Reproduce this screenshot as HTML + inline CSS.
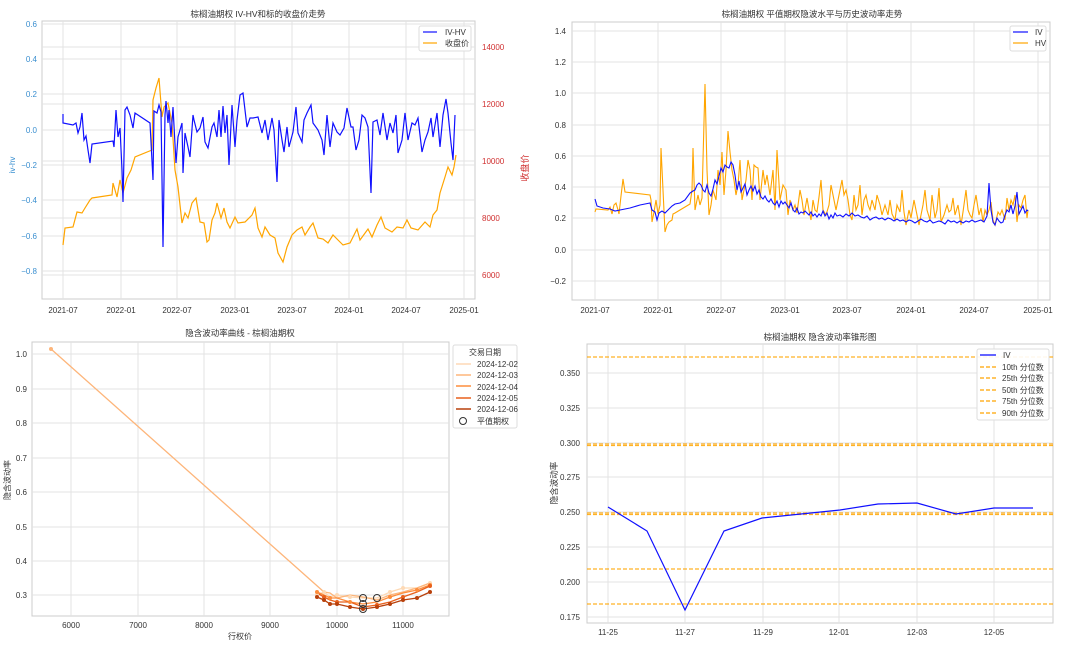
<!DOCTYPE html><html><head><meta charset="utf-8"><style>
html,body{margin:0;padding:0;background:#fff;}
svg{display:block;font-family:"Liberation Sans","Noto Sans CJK SC",sans-serif;}
.g line{stroke:#e3e3e3;stroke-width:1}
.t{font-size:8px;fill:#333}
.ti{font-size:8.5px;fill:#333}
</style></head><body>
<svg width="1080" height="646" viewBox="0 0 1080 646" xmlns="http://www.w3.org/2000/svg">
<!-- ===== Panel 1 ===== -->
<rect x="42" y="21" width="433" height="278" fill="#fff" stroke="#ccc"/>
<g class="g">
<line x1="63" y1="21" x2="63" y2="299"/><line x1="121" y1="21" x2="121" y2="299"/><line x1="177" y1="21" x2="177" y2="299"/><line x1="235" y1="21" x2="235" y2="299"/><line x1="292" y1="21" x2="292" y2="299"/><line x1="349" y1="21" x2="349" y2="299"/><line x1="406" y1="21" x2="406" y2="299"/><line x1="464" y1="21" x2="464" y2="299"/>
<line x1="42" y1="24" x2="475" y2="24"/><line x1="42" y1="59" x2="475" y2="59"/><line x1="42" y1="94" x2="475" y2="94"/><line x1="42" y1="130" x2="475" y2="130"/><line x1="42" y1="165" x2="475" y2="165"/><line x1="42" y1="200" x2="475" y2="200"/><line x1="42" y1="236" x2="475" y2="236"/><line x1="42" y1="271" x2="475" y2="271"/>
<line x1="42" y1="47" x2="475" y2="47"/><line x1="42" y1="104" x2="475" y2="104"/><line x1="42" y1="161" x2="475" y2="161"/><line x1="42" y1="218" x2="475" y2="218"/><line x1="42" y1="275" x2="475" y2="275"/>
</g>
<text class="ti" x="258" y="17" text-anchor="middle">棕榈油期权 IV-HV和标的收盘价走势</text>
<g font-size="8" fill="#3a8fd0" text-anchor="end">
<text x="37" y="27">0.6</text><text x="37" y="62">0.4</text><text x="37" y="97">0.2</text><text x="37" y="133">0.0</text><text x="37" y="168">−0.2</text><text x="37" y="203">−0.4</text><text x="37" y="239">−0.6</text><text x="37" y="274">−0.8</text>
</g>
<g font-size="8" fill="#d03030">
<text x="482" y="50">14000</text><text x="482" y="107">12000</text><text x="482" y="164">10000</text><text x="482" y="221">8000</text><text x="482" y="278">6000</text>
</g>
<text x="15" y="165" font-size="8" fill="#3a8fd0" transform="rotate(-90 15 165)" text-anchor="middle">iv-hv</text>
<text x="528" y="168" font-size="9" fill="#d03030" transform="rotate(-90 528 168)" text-anchor="middle">收盘价</text>
<g class="t" text-anchor="middle">
<text x="63" y="313">2021-07</text><text x="121" y="313">2022-01</text><text x="177" y="313">2022-07</text><text x="235" y="313">2023-01</text><text x="292" y="313">2023-07</text><text x="349" y="313">2024-01</text><text x="406" y="313">2024-07</text><text x="464" y="313">2025-01</text>
</g>
<polyline fill="none" stroke="#ffa500" stroke-width="1.2" points="63,245 65,228 73,227 77,212 82,213 85,208 90,200 92,198 112,195 113,183 117,197 120,180 123,193 127,178 131,170 135,157 152,150 153,100 156,88 159,78 162,117 164,107 168,103 172,123 175,170 178,187 182,223 185,213 188,218 192,203 196,198 200,222 204,223 207,242 209,240 212,220 215,213 217,203 221,218 224,208 227,222 230,228 235,217 238,223 245,222 252,215 255,208 258,228 262,237 265,227 270,235 275,238 278,253 283,262 287,247 292,235 297,230 302,227 305,235 310,227 313,223 318,238 323,239 328,243 333,235 338,240 343,245 350,243 357,229 360,240 368,229 372,237 377,225 381,217 385,228 392,232 397,227 403,228 407,220 411,228 418,230 425,222 430,227 433,215 437,210 440,193 445,177 448,167 452,175 454,167 456,155"/>
<polyline fill="none" stroke="#1010ff" stroke-width="1.2" points="63,114 63,123 73,125 76,123 78,133 80,127 82,113 84,140 86,136 88,150 90,163 92,144 113,141 114,147 116,110 118,137 120,128 122,170 123,202 125,110 127,107 130,115 133,128 135,113 150,123 153,180 154,111 157,113 159,105 161,112 163,247 165,115 166,101 168,123 169,110 171,137 173,107 176,163 178,137 182,123 183,173 185,133 188,147 190,157 193,115 194,120 197,132 200,128 203,117 205,142 208,148 212,127 214,123 217,137 219,110 221,137 223,106 225,133 227,115 229,165 232,105 235,147 237,120 240,95 243,93 247,127 250,118 253,118 258,117 262,133 265,120 268,140 272,118 274,130 277,182 279,120 282,140 284,152 287,127 289,147 293,132 296,107 298,133 302,142 304,120 307,113 311,105 313,123 318,130 322,140 324,155 327,115 330,147 333,123 337,132 340,135 344,128 347,108 351,127 353,127 356,150 359,140 362,115 365,118 368,127 371,193 373,122 377,120 380,135 383,113 387,140 390,123 393,133 396,115 398,153 402,140 405,113 408,140 412,123 415,125 418,118 422,152 425,140 428,132 431,118 433,137 437,113 440,147 443,115 446,99 448,113 451,143 453,160 455,115"/>
<rect x="419" y="26" width="52" height="25" fill="#fff" fill-opacity="0.9" stroke="#ddd" rx="2"/>
<line x1="423" y1="32" x2="437" y2="32" stroke="#1010ff" stroke-width="1.2"/><text class="t" x="445" y="35">IV-HV</text>
<line x1="423" y1="43" x2="437" y2="43" stroke="#ffa500" stroke-width="1.2"/><text class="t" x="445" y="46">收盘价</text>

<!-- ===== Panel 2 ===== -->
<rect x="572" y="22" width="478" height="278" fill="#fff" stroke="#ccc"/>
<g class="g">
<line x1="595" y1="22" x2="595" y2="300"/><line x1="658" y1="22" x2="658" y2="300"/><line x1="721" y1="22" x2="721" y2="300"/><line x1="785" y1="22" x2="785" y2="300"/><line x1="847" y1="22" x2="847" y2="300"/><line x1="911" y1="22" x2="911" y2="300"/><line x1="974" y1="22" x2="974" y2="300"/><line x1="1038" y1="22" x2="1038" y2="300"/>
<line x1="572" y1="31" x2="1050" y2="31"/><line x1="572" y1="62" x2="1050" y2="62"/><line x1="572" y1="93" x2="1050" y2="93"/><line x1="572" y1="125" x2="1050" y2="125"/><line x1="572" y1="156" x2="1050" y2="156"/><line x1="572" y1="187" x2="1050" y2="187"/><line x1="572" y1="218" x2="1050" y2="218"/><line x1="572" y1="250" x2="1050" y2="250"/><line x1="572" y1="281" x2="1050" y2="281"/>
</g>
<text class="ti" x="812" y="17" text-anchor="middle">棕榈油期权 平值期权隐波水平与历史波动率走势</text>
<g class="t" text-anchor="end">
<text x="566" y="34">1.4</text><text x="566" y="65">1.2</text><text x="566" y="96">1.0</text><text x="566" y="128">0.8</text><text x="566" y="159">0.6</text><text x="566" y="190">0.4</text><text x="566" y="221">0.2</text><text x="566" y="253">0.0</text><text x="566" y="284">−0.2</text>
</g>
<g class="t" text-anchor="middle">
<text x="595" y="313">2021-07</text><text x="658" y="313">2022-01</text><text x="721" y="313">2022-07</text><text x="785" y="313">2023-01</text><text x="847" y="313">2023-07</text><text x="911" y="313">2024-01</text><text x="974" y="313">2024-07</text><text x="1038" y="313">2025-01</text>
</g>
<polyline fill="none" stroke="#ffa500" stroke-width="1.1" points="595,212 596,209 608,210 610,207 612,214 614,205 616,203 618,210 619,214 621,196 623,179 625,192 650,195 651,200 652,222 654,212 656,200 658,214 660,205 661,148 663,190 665,232 667,225 669,222 672,220 673,214 675,213 690,204 692,190 693,148 695,210 698,195 700,205 702,198 705,84 707,170 709,215 711,205 713,190 716,200 718,170 720,185 722,152 724,195 726,170 728,131 730,152 732,170 734,180 736,195 738,185 740,160 742,200 744,190 746,180 748,160 750,170 752,200 754,165 756,167 758,168 760,200 763,170 765,185 767,175 770,195 773,170 775,210 777,150 780,200 783,185 786,190 788,215 790,200 793,210 795,205 797,213 800,190 802,200 804,215 807,198 809,210 811,220 813,200 815,210 817,212 819,197 821,180 823,210 826,215 829,205 831,185 833,195 836,210 838,200 840,190 842,180 844,195 846,190 848,200 850,215 852,220 854,195 856,210 858,205 860,185 862,215 864,200 866,195 868,205 870,210 872,200 875,210 877,195 880,205 882,215 885,205 888,215 890,200 892,214 895,220 897,205 900,212 902,190 904,212 906,225 909,210 911,218 914,200 916,210 919,225 921,215 923,205 925,190 927,210 930,220 932,195 935,218 937,210 939,188 941,222 944,215 947,205 949,212 951,210 953,198 955,215 958,205 961,225 963,212 966,190 968,210 970,215 972,218 974,205 976,195 979,215 981,208 983,222 985,210 987,215 989,210 991,202 993,220 995,225 998,212 1000,215 1002,210 1005,220 1007,198 1009,210 1011,200 1013,205 1015,195 1017,222 1019,205 1021,208 1023,200 1025,195 1027,218 1028,210"/>
<polyline fill="none" stroke="#1010ff" stroke-width="1.1" points="595,199 597,206 603,208 610,209 615,211 620,210 625,209 630,208 640,205 650,203 652,210 655,212 657,220 659,213 662,211 665,213 668,210 672,206 675,204 680,203 685,200 690,193 693,191 695,190 697,185 699,183 701,185 703,190 705,192 707,185 709,193 711,196 713,189 715,180 717,184 719,176 721,168 723,172 725,165 727,167 729,168 731,162 733,165 735,175 737,190 739,181 741,192 743,188 745,184 747,195 749,190 751,186 753,191 755,186 757,194 759,190 761,197 763,199 765,196 767,200 769,202 771,199 773,203 775,205 777,201 779,207 781,201 783,204 785,202 787,205 789,208 791,203 793,210 795,212 797,208 799,214 801,212 803,213 805,211 807,213 809,215 811,212 813,216 815,214 817,217 819,214 821,216 823,211 825,216 827,213 829,219 831,215 833,218 835,213 837,216 840,215 843,217 846,214 849,216 852,213 855,216 858,215 861,217 864,218 867,216 870,220 873,218 876,217 879,219 882,218 885,220 888,218 891,219 894,221 897,219 900,221 903,220 906,222 909,220 912,221 915,223 918,221 921,219 924,221 927,222 930,220 933,223 936,222 939,221 942,222 945,224 948,220 951,222 954,221 957,223 960,221 963,223 966,221 969,222 972,220 975,222 978,221 981,220 984,222 987,216 989,183 991,210 993,222 995,225 997,218 999,221 1001,223 1003,222 1005,215 1007,210 1009,212 1011,205 1013,214 1015,206 1017,192 1019,214 1021,210 1023,206 1025,213 1027,210 1028,211"/>
<rect x="1010" y="26" width="36" height="25" fill="#fff" fill-opacity="0.9" stroke="#ddd" rx="2"/>
<line x1="1013" y1="32" x2="1028" y2="32" stroke="#1010ff" stroke-width="1.2"/><text class="t" x="1035" y="35">IV</text>
<line x1="1013" y1="43" x2="1028" y2="43" stroke="#ffa500" stroke-width="1.2"/><text class="t" x="1035" y="46">HV</text>

<!-- ===== Panel 3 ===== -->
<rect x="32" y="342" width="417" height="274" fill="#fff" stroke="#ccc"/>
<g class="g">
<line x1="71" y1="342" x2="71" y2="616"/><line x1="138" y1="342" x2="138" y2="616"/><line x1="204" y1="342" x2="204" y2="616"/><line x1="270" y1="342" x2="270" y2="616"/><line x1="337" y1="342" x2="337" y2="616"/><line x1="403" y1="342" x2="403" y2="616"/>
<line x1="32" y1="354" x2="449" y2="354"/><line x1="32" y1="389" x2="449" y2="389"/><line x1="32" y1="423" x2="449" y2="423"/><line x1="32" y1="458" x2="449" y2="458"/><line x1="32" y1="492" x2="449" y2="492"/><line x1="32" y1="527" x2="449" y2="527"/><line x1="32" y1="561" x2="449" y2="561"/><line x1="32" y1="595" x2="449" y2="595"/>
</g>
<text class="ti" x="240" y="336" text-anchor="middle">隐含波动率曲线 - 棕榈油期权</text>
<g class="t" text-anchor="end">
<text x="27" y="357">1.0</text><text x="27" y="392">0.9</text><text x="27" y="426">0.8</text><text x="27" y="461">0.7</text><text x="27" y="495">0.6</text><text x="27" y="530">0.5</text><text x="27" y="564">0.4</text><text x="27" y="598">0.3</text>
</g>
<g class="t" text-anchor="middle">
<text x="71" y="628">6000</text><text x="138" y="628">7000</text><text x="204" y="628">8000</text><text x="270" y="628">9000</text><text x="337" y="628">10000</text><text x="403" y="628">11000</text>
<text x="240" y="639">行权价</text>
</g>
<text class="t" x="10" y="480" transform="rotate(-90 10 480)" text-anchor="middle">隐含波动率</text>
<g fill="none" stroke-width="1.3">
<polyline stroke="#fdd9b5" points="317,595 324,592 330,597 337,595 350,597 363,598 377,598 390,592 403,588 417,588 430,583"/>
<polyline stroke="#fdb57a" points="51,349 324,592 330,593 337,598 350,595 363,597 377,600 390,595 403,592 417,588 430,583"/>
<polyline stroke="#fd8d3c" points="317,592 324,595 330,598 337,598 350,602 363,604 377,602 390,597 403,593 417,590 430,585"/>
<polyline stroke="#e8601c" points="317,593 324,597 330,600 337,602 350,602 363,607 377,605 390,602 403,597 417,592 430,586"/>
<polyline stroke="#b8400b" points="317,597 324,600 330,604 337,604 350,607 363,609 377,607 390,604 403,600 417,598 430,592"/>
</g>
<g>
<circle cx="51" cy="349" r="2" fill="#fdb57a"/>
<g fill="#fdd9b5"><circle cx="317" cy="595" r="2"/><circle cx="324" cy="592" r="2"/><circle cx="337" cy="595" r="2"/><circle cx="350" cy="597" r="2"/><circle cx="390" cy="592" r="2"/><circle cx="403" cy="588" r="2"/><circle cx="430" cy="583" r="2"/></g>
<g fill="#fd8d3c"><circle cx="317" cy="592" r="2"/><circle cx="330" cy="598" r="2"/><circle cx="350" cy="602" r="2"/><circle cx="390" cy="597" r="2"/><circle cx="417" cy="590" r="2"/><circle cx="430" cy="585" r="2"/></g>
<g fill="#e8601c"><circle cx="324" cy="597" r="2"/><circle cx="337" cy="602" r="2"/><circle cx="377" cy="605" r="2"/><circle cx="403" cy="597" r="2"/><circle cx="430" cy="586" r="2"/></g>
<g fill="#b8400b"><circle cx="317" cy="597" r="2"/><circle cx="324" cy="600" r="2"/><circle cx="330" cy="604" r="2"/><circle cx="337" cy="604" r="2"/><circle cx="350" cy="607" r="2"/><circle cx="363" cy="609" r="2"/><circle cx="377" cy="607" r="2"/><circle cx="390" cy="604" r="2"/><circle cx="403" cy="600" r="2"/><circle cx="417" cy="598" r="2"/><circle cx="430" cy="592" r="2"/></g>
</g>
<g fill="none" stroke="#333" stroke-width="1">
<circle cx="363" cy="598" r="3.5"/><circle cx="377" cy="598" r="3.5"/><circle cx="363" cy="604" r="3.5"/><circle cx="363" cy="609" r="3.5"/>
</g>
<rect x="453" y="345" width="64" height="83" fill="#fff" stroke="#ddd" rx="2"/>
<text class="t" x="485" y="355" text-anchor="middle">交易日期</text>
<line x1="456" y1="364" x2="471" y2="364" stroke="#fdd9b5" stroke-width="1.5"/><text class="t" x="477" y="367">2024-12-02</text>
<line x1="456" y1="375" x2="471" y2="375" stroke="#fdb57a" stroke-width="1.5"/><text class="t" x="477" y="378">2024-12-03</text>
<line x1="456" y1="386" x2="471" y2="386" stroke="#fd8d3c" stroke-width="1.5"/><text class="t" x="477" y="390">2024-12-04</text>
<line x1="456" y1="398" x2="471" y2="398" stroke="#e8601c" stroke-width="1.5"/><text class="t" x="477" y="401">2024-12-05</text>
<line x1="456" y1="409" x2="471" y2="409" stroke="#b8400b" stroke-width="1.5"/><text class="t" x="477" y="412">2024-12-06</text>
<circle cx="463" cy="421" r="3.5" fill="none" stroke="#333"/><text class="t" x="477" y="424">平值期权</text>

<!-- ===== Panel 4 ===== -->
<rect x="587" y="344" width="466" height="279" fill="#fff" stroke="#ccc"/>
<g class="g">
<line x1="608" y1="344" x2="608" y2="623"/><line x1="685" y1="344" x2="685" y2="623"/><line x1="763" y1="344" x2="763" y2="623"/><line x1="839" y1="344" x2="839" y2="623"/><line x1="917" y1="344" x2="917" y2="623"/><line x1="994" y1="344" x2="994" y2="623"/>
<line x1="587" y1="373" x2="1053" y2="373"/><line x1="587" y1="408" x2="1053" y2="408"/><line x1="587" y1="443" x2="1053" y2="443"/><line x1="587" y1="477" x2="1053" y2="477"/><line x1="587" y1="512" x2="1053" y2="512"/><line x1="587" y1="547" x2="1053" y2="547"/><line x1="587" y1="582" x2="1053" y2="582"/><line x1="587" y1="617" x2="1053" y2="617"/>
</g>
<text class="ti" x="820" y="340" text-anchor="middle">棕榈油期权 隐含波动率锥形图</text>
<g class="t" text-anchor="end">
<text x="580" y="376">0.350</text><text x="580" y="411">0.325</text><text x="580" y="446">0.300</text><text x="580" y="480">0.275</text><text x="580" y="515">0.250</text><text x="580" y="550">0.225</text><text x="580" y="585">0.200</text><text x="580" y="620">0.175</text>
</g>
<g class="t" text-anchor="middle">
<text x="608" y="635">11-25</text><text x="685" y="635">11-27</text><text x="763" y="635">11-29</text><text x="839" y="635">12-01</text><text x="917" y="635">12-03</text><text x="994" y="635">12-05</text>
</g>
<text x="557" y="483" font-size="8.5" fill="#333" transform="rotate(-90 557 483)" text-anchor="middle">隐含波动率</text>
<g stroke="#ffa500" stroke-width="1.2" stroke-dasharray="4,2" opacity="0.85">
<line x1="587" y1="357" x2="1053" y2="357"/><line x1="587" y1="444" x2="1053" y2="444"/><line x1="587" y1="445.5" x2="1053" y2="445.5"/><line x1="587" y1="513" x2="1053" y2="513"/><line x1="587" y1="514.5" x2="1053" y2="514.5"/><line x1="587" y1="569" x2="1053" y2="569"/><line x1="587" y1="604" x2="1053" y2="604"/>
</g>
<polyline fill="none" stroke="#1010ff" stroke-width="1.2" points="608,507 647,531 685,610 724,531 762,518 801,514 840,510 878,504 917,503 956,514 994,508 1033,508"/>
<rect x="977" y="349" width="72" height="71" fill="#fff" fill-opacity="0.9" stroke="#ddd" rx="2"/>
<line x1="980" y1="355" x2="996" y2="355" stroke="#1010ff" stroke-width="1.3"/><text class="t" x="1003" y="358">IV</text>
<g stroke="#ffa500" stroke-width="1.2" stroke-dasharray="4,2">
<line x1="980" y1="367" x2="996" y2="367"/><line x1="980" y1="378" x2="996" y2="378"/><line x1="980" y1="390" x2="996" y2="390"/><line x1="980" y1="401" x2="996" y2="401"/><line x1="980" y1="413" x2="996" y2="413"/>
</g>
<text class="t" x="1002" y="370">10th 分位数</text><text class="t" x="1002" y="381">25th 分位数</text><text class="t" x="1002" y="393">50th 分位数</text><text class="t" x="1002" y="404">75th 分位数</text><text class="t" x="1002" y="416">90th 分位数</text>
</svg>
</body></html>
